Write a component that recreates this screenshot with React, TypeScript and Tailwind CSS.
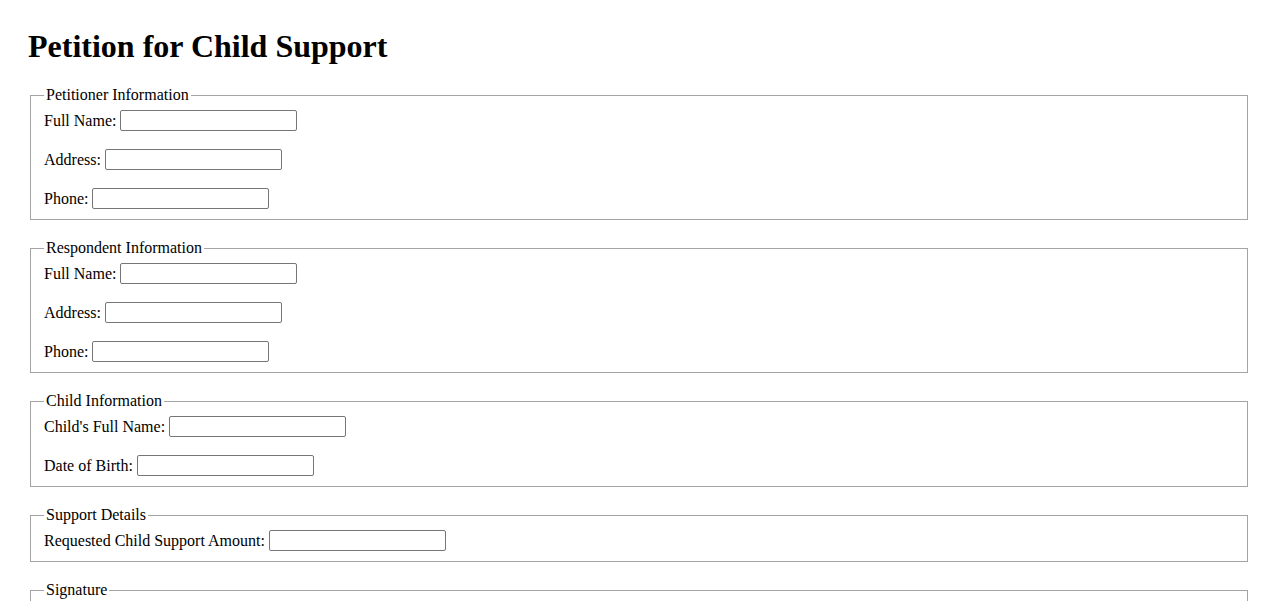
const sections = [
  { legend: "Petitioner Information", fields: ["Full Name:", "Address:", "Phone:"] },
  { legend: "Respondent Information", fields: ["Full Name:", "Address:", "Phone:"] },
  { legend: "Child Information", fields: ["Child's Full Name:", "Date of Birth:"] },
  { legend: "Support Details", fields: ["Requested Child Support Amount:"] },
  { legend: "Signature", fields: ["Signature:", "Date:"] },
];

export default function App() {
  return (
    <div className="min-h-screen bg-white px-[28px] pt-[28px] text-black text-[16px] leading-[normal] font-['Liberation_Serif','Times_New_Roman',serif]">
      <h1 className="text-[32px] font-bold leading-[normal] mb-[21px]">Petition for Child Support</h1>
      <form>
        {sections.map((s) => (
          <fieldset
            key={s.legend}
            className="mx-[2px] mb-[19px] border border-[#a4a4a4] px-[13px] pt-[6px] pb-[10px]"
          >
            <legend className="px-[2px]">{s.legend}</legend>
            <div className="flex flex-col gap-[18px]">
              {s.fields.map((f) => (
                <div key={f} className="flex items-center gap-[4px] h-[21px]">
                  <label>{f}</label>
                  <input
                    type="text"
                    className="w-[177px] h-[21px] border border-[#767676] rounded-[2px] bg-white px-[2px] text-[13px] font-['Liberation_Sans',Arial,sans-serif]"
                  />
                </div>
              ))}
            </div>
          </fieldset>
        ))}
      </form>
    </div>
  );
}
